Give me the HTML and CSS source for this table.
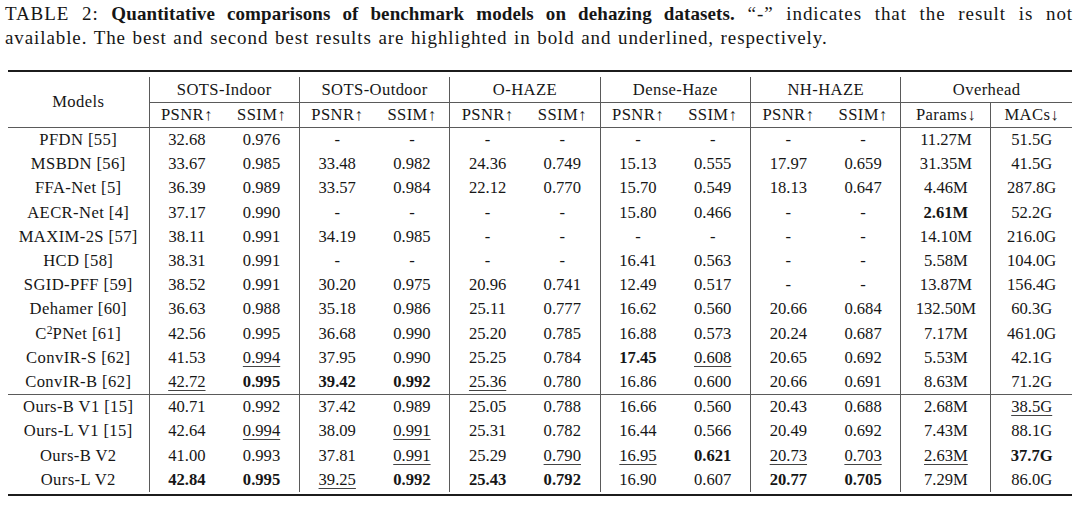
FILE: index.html
```html
<!DOCTYPE html>
<html>
<head>
<meta charset="utf-8">
<link rel="stylesheet" href="styles.css">
</head>
<body>
<div class="caption">
  <div class="cap-line1">TABLE 2: <b>Quantitative comparisons of benchmark models on dehazing datasets.</b> “-” indicates that the result is not</div>
  <div class="cap-line2">available. The best and second best results are highlighted in bold and underlined, respectively.</div>
</div>
<div class="rule top"></div>
<table class="res">
  <colgroup>
    <col class="c-model">
    <col class="c-sub"><col class="c-sub">
    <col class="c-sub"><col class="c-sub">
    <col class="c-sub"><col class="c-sub">
    <col class="c-sub"><col class="c-sub">
    <col class="c-sub"><col class="c-sub">
    <col class="c-params"><col class="c-macs">
  </colgroup>
  <thead>
    <tr class="h1">
      <th rowspan="2" class="model">Models</th>
      <th colspan="2" class="grp l">SOTS-Indoor</th>
      <th colspan="2" class="grp l">SOTS-Outdoor</th>
      <th colspan="2" class="grp l">O-HAZE</th>
      <th colspan="2" class="grp l">Dense-Haze</th>
      <th colspan="2" class="grp l">NH-HAZE</th>
      <th colspan="2" class="grp l">Overhead</th>
    </tr>
    <tr class="h2">
      <th class="l">PSNR↑</th><th>SSIM↑</th>
      <th class="l">PSNR↑</th><th>SSIM↑</th>
      <th class="l">PSNR↑</th><th>SSIM↑</th>
      <th class="l">PSNR↑</th><th>SSIM↑</th>
      <th class="l">PSNR↑</th><th>SSIM↑</th>
      <th class="l">Params↓</th><th class="l">MACs↓</th>
    </tr>
  </thead>
  <tbody class="b1">
    <tr><td class="name">PFDN [55]</td><td class="l">32.68</td><td>0.976</td><td class="l">-</td><td>-</td><td class="l">-</td><td>-</td><td class="l">-</td><td>-</td><td class="l">-</td><td>-</td><td class="l">11.27M</td><td class="l">51.5G</td></tr>
    <tr><td class="name">MSBDN [56]</td><td class="l">33.67</td><td>0.985</td><td class="l">33.48</td><td>0.982</td><td class="l">24.36</td><td>0.749</td><td class="l">15.13</td><td>0.555</td><td class="l">17.97</td><td>0.659</td><td class="l">31.35M</td><td class="l">41.5G</td></tr>
    <tr><td class="name">FFA-Net [5]</td><td class="l">36.39</td><td>0.989</td><td class="l">33.57</td><td>0.984</td><td class="l">22.12</td><td>0.770</td><td class="l">15.70</td><td>0.549</td><td class="l">18.13</td><td>0.647</td><td class="l">4.46M</td><td class="l">287.8G</td></tr>
    <tr><td class="name">AECR-Net [4]</td><td class="l">37.17</td><td>0.990</td><td class="l">-</td><td>-</td><td class="l">-</td><td>-</td><td class="l">15.80</td><td>0.466</td><td class="l">-</td><td>-</td><td class="l"><b>2.61M</b></td><td class="l">52.2G</td></tr>
    <tr><td class="name">MAXIM-2S [57]</td><td class="l">38.11</td><td>0.991</td><td class="l">34.19</td><td>0.985</td><td class="l">-</td><td>-</td><td class="l">-</td><td>-</td><td class="l">-</td><td>-</td><td class="l">14.10M</td><td class="l">216.0G</td></tr>
    <tr><td class="name">HCD [58]</td><td class="l">38.31</td><td>0.991</td><td class="l">-</td><td>-</td><td class="l">-</td><td>-</td><td class="l">16.41</td><td>0.563</td><td class="l">-</td><td>-</td><td class="l">5.58M</td><td class="l">104.0G</td></tr>
    <tr><td class="name">SGID-PFF [59]</td><td class="l">38.52</td><td>0.991</td><td class="l">30.20</td><td>0.975</td><td class="l">20.96</td><td>0.741</td><td class="l">12.49</td><td>0.517</td><td class="l">-</td><td>-</td><td class="l">13.87M</td><td class="l">156.4G</td></tr>
    <tr><td class="name">Dehamer [60]</td><td class="l">36.63</td><td>0.988</td><td class="l">35.18</td><td>0.986</td><td class="l">25.11</td><td>0.777</td><td class="l">16.62</td><td>0.560</td><td class="l">20.66</td><td>0.684</td><td class="l">132.50M</td><td class="l">60.3G</td></tr>
    <tr><td class="name">C<sup>2</sup>PNet [61]</td><td class="l">42.56</td><td>0.995</td><td class="l">36.68</td><td>0.990</td><td class="l">25.20</td><td>0.785</td><td class="l">16.88</td><td>0.573</td><td class="l">20.24</td><td>0.687</td><td class="l">7.17M</td><td class="l">461.0G</td></tr>
    <tr><td class="name">ConvIR-S [62]</td><td class="l">41.53</td><td><u>0.994</u></td><td class="l">37.95</td><td>0.990</td><td class="l">25.25</td><td>0.784</td><td class="l"><b>17.45</b></td><td><u>0.608</u></td><td class="l">20.65</td><td>0.692</td><td class="l">5.53M</td><td class="l">42.1G</td></tr>
    <tr><td class="name">ConvIR-B [62]</td><td class="l"><u>42.72</u></td><td><b>0.995</b></td><td class="l"><b>39.42</b></td><td><b>0.992</b></td><td class="l"><u>25.36</u></td><td>0.780</td><td class="l">16.86</td><td>0.600</td><td class="l">20.66</td><td>0.691</td><td class="l">8.63M</td><td class="l">71.2G</td></tr>
  </tbody>
  <tbody class="b2">
    <tr><td class="name">Ours-B V1 [15]</td><td class="l">40.71</td><td>0.992</td><td class="l">37.42</td><td>0.989</td><td class="l">25.05</td><td>0.788</td><td class="l">16.66</td><td>0.560</td><td class="l">20.43</td><td>0.688</td><td class="l">2.68M</td><td class="l"><u>38.5G</u></td></tr>
    <tr><td class="name">Ours-L V1 [15]</td><td class="l">42.64</td><td><u>0.994</u></td><td class="l">38.09</td><td><u>0.991</u></td><td class="l">25.31</td><td>0.782</td><td class="l">16.44</td><td>0.566</td><td class="l">20.49</td><td>0.692</td><td class="l">7.43M</td><td class="l">88.1G</td></tr>
    <tr><td class="name">Ours-B V2</td><td class="l">41.00</td><td>0.993</td><td class="l">37.81</td><td><u>0.991</u></td><td class="l">25.29</td><td><u>0.790</u></td><td class="l"><u>16.95</u></td><td><b>0.621</b></td><td class="l"><u>20.73</u></td><td><u>0.703</u></td><td class="l"><u>2.63M</u></td><td class="l"><b>37.7G</b></td></tr>
    <tr><td class="name">Ours-L V2</td><td class="l"><b>42.84</b></td><td><b>0.995</b></td><td class="l"><u>39.25</u></td><td><b>0.992</b></td><td class="l"><b>25.43</b></td><td><b>0.792</b></td><td class="l">16.90</td><td>0.607</td><td class="l"><b>20.77</b></td><td><b>0.705</b></td><td class="l">7.29M</td><td class="l">86.0G</td></tr>
  </tbody>
</table>
<div class="rule bottom"></div>
</body>
</html>
```

FILE: styles.css
```css
html, body {
  margin: 0;
  padding: 0;
  background: #ffffff;
}

body {
  width: 1080px;
  font-family: "Liberation Serif", "Times New Roman", serif;
  color: #161616;
}

.caption {
  padding: 2px 7px 0 5px;
  font-size: 19px;
  line-height: 24px;
  letter-spacing: 0.9px;
  word-spacing: 1px;
}

.cap-line1 {
  text-align: justify;
  text-align-last: justify;
}

.cap-line1 b {
  font-weight: bold;
  letter-spacing: 0.1px;
}

.rule {
  width: 1064px;
  margin-left: 8px;
  background: #1c1c1c;
}

.rule.top {
  height: 2px;
  margin-top: 20px;
}

.rule.bottom {
  height: 2px;
  margin-top: 2px;
}

.res {
  margin: 5px 0 0 8px;
  width: 1064px;
  table-layout: fixed;
  border-collapse: collapse;
  font-size: 16.6px;
}

.c-model { width: 141px; }
.c-sub { width: 75.2px; }
.c-params { width: 90px; }
.c-macs { width: 81px; }

.res th,
.res td {
  padding: 0;
  text-align: center;
  vertical-align: middle;
  white-space: nowrap;
  font-weight: normal;
  line-height: 18px;
}

.res th,
.res td.name {
  letter-spacing: 0.4px;
}

.res .l {
  border-left: 1px solid #5a5a5a;
}

.res tr.h1 th {
  height: 25px;
}

.res th.grp {
  border-bottom: 1px solid #5a5a5a;
}

.res tr.h2 th {
  height: 24px;
  border-bottom: 1px solid #5a5a5a;
}

.res th.model {
  border-bottom: 1px solid #5a5a5a;
}

.res tbody td {
  height: 24.2px;
}

.res tbody.b2 tr:first-child td {
  border-top: 1px solid #5a5a5a;
}

.res b {
  font-weight: bold;
}

.res u {
  text-decoration: underline;
  text-decoration-thickness: 1px;
  text-underline-offset: 3px;
  text-decoration-color: #444;
}

.res sup {
  font-size: 0.7em;
  line-height: 0;
  vertical-align: 0.45em;
  letter-spacing: 0;
}
```
